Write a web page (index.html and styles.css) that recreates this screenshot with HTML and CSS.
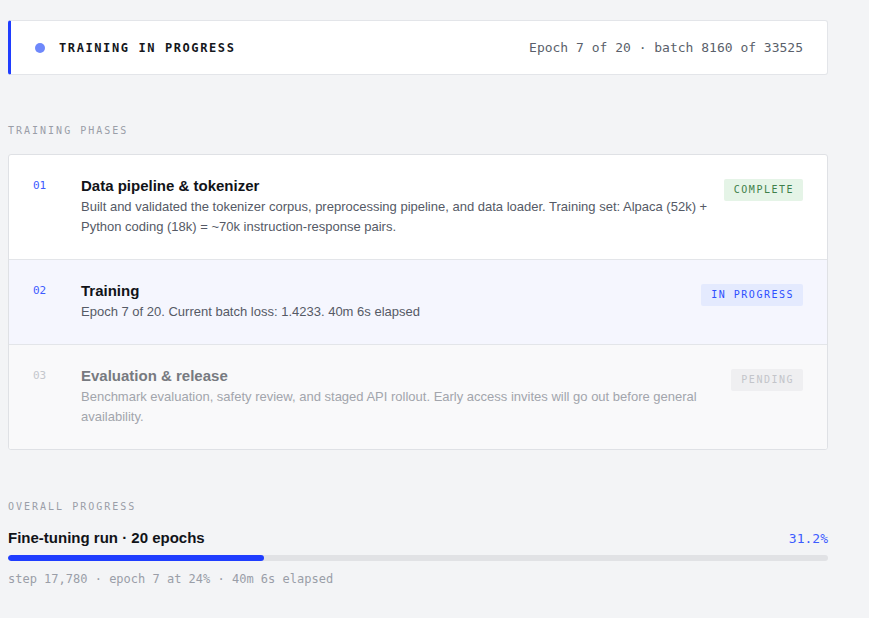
FILE: index.html
```html
<!DOCTYPE html>
<html lang="en">
<head>
    <meta charset="UTF-8">
    <meta name="viewport" content="width=device-width, initial-scale=1.0">
    <title>Training status</title>
    <link rel="stylesheet" href="styles.css">
</head>
<body>

<div class="page">
    <div class="status-card">
        <div class="status-left">
            <span class="dot"></span>
            <span class="status-title">TRAINING IN PROGRESS</span>
        </div>
        <div class="status-meta">Epoch 7 of 20 · batch 8160 of 33525</div>
    </div>

    <div class="section">
        <div class="section-label">TRAINING PHASES</div>
        <div class="phases">
            <div class="phase done">
                <div class="phase-num">01</div>
                <div class="phase-body">
                    <div class="phase-title">Data pipeline &amp; tokenizer</div>
                    <div class="phase-desc">Built and validated the tokenizer corpus, preprocessing pipeline, and data loader. Training set: Alpaca (52k) + Python coding (18k) = ~70k instruction-response pairs.</div>
                </div>
                <span class="badge badge-done">COMPLETE</span>
            </div>
            <div class="phase active">
                <div class="phase-num">02</div>
                <div class="phase-body">
                    <div class="phase-title">Training</div>
                    <div class="phase-desc">Epoch 7 of 20. Current batch loss: 1.4233. 40m 6s elapsed</div>
                </div>
                <span class="badge badge-active">IN PROGRESS</span>
            </div>
            <div class="phase pending">
                <div class="phase-num">03</div>
                <div class="phase-body">
                    <div class="phase-title">Evaluation &amp; release</div>
                    <div class="phase-desc">Benchmark evaluation, safety review, and staged API rollout. Early access invites will go out before general availability.</div>
                </div>
                <span class="badge badge-pending">PENDING</span>
            </div>
        </div>
    </div>

    <div class="section progress-section">
        <div class="section-label">OVERALL PROGRESS</div>
        <div class="progress-head">
            <div class="progress-title">Fine-tuning run · 20 epochs</div>
            <div class="progress-pct">31.2%</div>
        </div>
        <div class="bar">
            <div class="bar-fill" style="width: 31.2%;"></div>
        </div>
        <div class="progress-caption">step 17,780 · epoch 7 at 24% · 40m 6s elapsed</div>
    </div>
</div>

</body>
</html>
```

FILE: styles.css
```css
body {
    margin: 0;
    background-color: #f3f4f6;
    font-family: "Liberation Sans", Arial, sans-serif;
    color: #111318;
}

.page {
    width: 820px;
    padding: 20px 8px 0 8px;
}

/* status bar */
.status-card {
    display: flex;
    justify-content: space-between;
    align-items: center;
    height: 53px;
    padding: 0 24px;
    background-color: white;
    border: 1px solid #e3e5e9;
    border-left: 3px solid #1f3dff;
    border-radius: 3px;
    font-family: "DejaVu Sans Mono", monospace;
}

.status-left {
    display: flex;
    align-items: center;
    gap: 14px;
}

.dot {
    width: 10px;
    height: 10px;
    border-radius: 50%;
    background-color: #6e88fb;
}

.status-title {
    font-size: 12px;
    font-weight: bold;
    letter-spacing: 1.6px;
    color: #15171c;
}

.status-meta {
    font-size: 13px;
    color: #5a5f6b;
}

/* sections */
.section {
    margin-top: 49px;
}

.section-label {
    font-family: "DejaVu Sans Mono", monospace;
    font-size: 10px;
    line-height: 14px;
    letter-spacing: 2px;
    color: #9a9ea8;
    margin-bottom: 16px;
}

.phases {
    background-color: white;
    border: 1px solid #dfe1e5;
    border-radius: 3px;
    overflow: hidden;
}

.phase {
    display: flex;
    align-items: flex-start;
    padding: 20px 24px 22px 24px;
    border-bottom: 1px solid #e3e5e9;
}

.phase:last-child {
    border-bottom: none;
}

.phase.active {
    background-color: #f5f6fe;
}

.phase.pending {
    background-color: #f9f9fa;
}

.phase-num {
    width: 48px;
    flex-shrink: 0;
    font-family: "DejaVu Sans Mono", monospace;
    font-size: 11px;
    line-height: 21px;
    color: #3d5cff;
}

.phase-body {
    flex: 1;
    margin-right: 16px;
}

.phase-title {
    font-size: 15px;
    font-weight: bold;
    line-height: 21px;
    color: #111318;
}

.phase-desc {
    margin-top: 1px;
    font-size: 13px;
    line-height: 20px;
    color: #555a66;
}

.pending .phase-num {
    color: #c4c7cd;
}

.pending .phase-title {
    color: #777a80;
}

.pending .phase-desc {
    color: #a2a5ac;
}

.badge {
    margin-top: 4px;
    padding: 0 9px 0 10px;
    height: 22px;
    line-height: 22px;
    font-family: "DejaVu Sans Mono", monospace;
    font-size: 10px;
    letter-spacing: 1.5px;
    border-radius: 2px;
    white-space: nowrap;
}

.badge-done {
    background-color: #e5f4e7;
    color: #3f7f4a;
}

.badge-active {
    background-color: #e4eafe;
    color: #2e4fff;
}

.badge-pending {
    background-color: #efeff1;
    color: #c3c5ca;
}

/* overall progress */
.progress-section {
    margin-top: 50px;
}

.progress-section .section-label {
    margin-bottom: 14px;
}

.progress-head {
    display: flex;
    justify-content: space-between;
    align-items: center;
    margin-bottom: 7px;
}

.progress-title {
    font-size: 15px;
    font-weight: bold;
    line-height: 20px;
}

.progress-pct {
    font-family: "DejaVu Sans Mono", monospace;
    font-size: 13px;
    color: #3d5cff;
}

.bar {
    height: 6px;
    border-radius: 3px;
    background-color: #e1e2e5;
    overflow: hidden;
}

.bar-fill {
    height: 100%;
    border-radius: 3px;
    background-color: #1f3dff;
}

.progress-caption {
    margin-top: 10px;
    font-family: "DejaVu Sans Mono", monospace;
    font-size: 12px;
    line-height: 16px;
    color: #9a9ea8;
}
```
